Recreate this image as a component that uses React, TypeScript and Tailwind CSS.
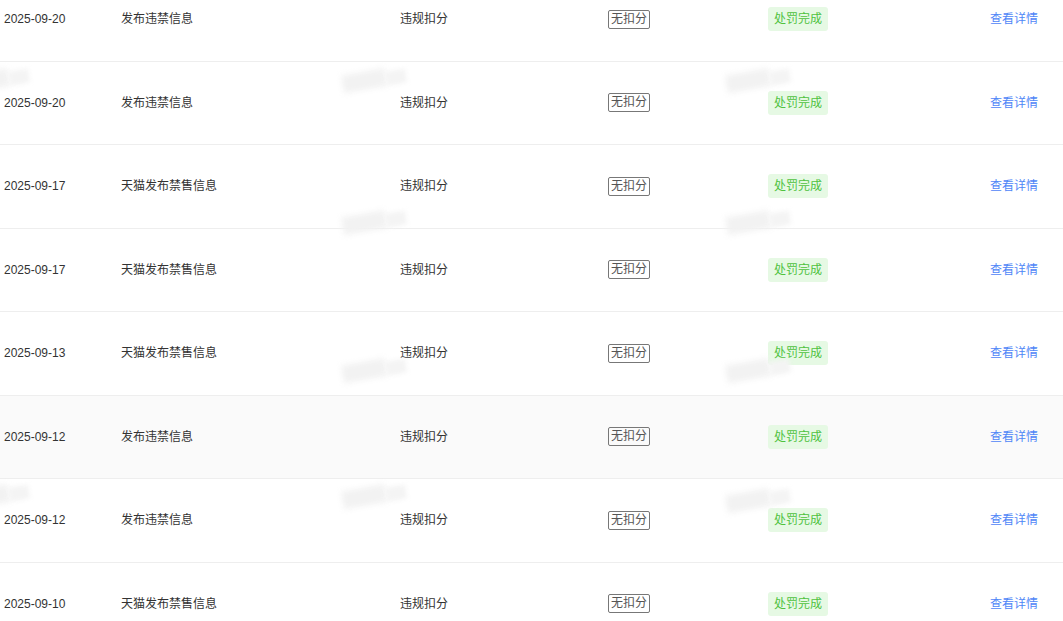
type Row = {
  date: string;
  reason: string;
};

const rows: Row[] = [
  { date: "2025-09-20", reason: "发布违禁信息" },
  { date: "2025-09-20", reason: "发布违禁信息" },
  { date: "2025-09-17", reason: "天猫发布禁售信息" },
  { date: "2025-09-17", reason: "天猫发布禁售信息" },
  { date: "2025-09-13", reason: "天猫发布禁售信息" },
  { date: "2025-09-12", reason: "发布违禁信息" },
  { date: "2025-09-12", reason: "发布违禁信息" },
  { date: "2025-09-10", reason: "天猫发布禁售信息" },
];

// 水印只是淡淡的模糊块,位置大致对齐截图
const marks = [
  { x: -35, y: 70 },
  { x: 342, y: 70 },
  { x: 726, y: 70 },
  { x: 342, y: 212 },
  { x: 726, y: 212 },
  { x: 342, y: 360 },
  { x: 726, y: 360 },
  { x: -35, y: 486 },
  { x: 342, y: 486 },
  { x: 726, y: 490 },
];

function PenaltyRow({ row, hover }: { row: Row; hover: boolean }) {
  return (
    <div
      className={`grid h-[83.5px] grid-cols-[117px_279px_208px_160px_222px_1fr] items-center border-b border-[#eeeeee] pl-1 text-[12px] text-[#333] ${
        hover ? "bg-[#fafafa]" : "bg-white"
      }`}
    >
      <span>{row.date}</span>
      <span>{row.reason}</span>
      <span>违规扣分</span>
      <span>
        <span className="inline-block rounded-[2px] border border-[#777] px-[2px] leading-[17px] text-[#555]">
          无扣分
        </span>
      </span>
      <span>
        <span className="inline-block rounded-[3px] bg-[#e6f9e4] px-[6px] leading-[24px] text-[#4fc23f]">
          处罚完成
        </span>
      </span>
      <span className="cursor-pointer text-[#4f86f7]">查看详情</span>
    </div>
  );
}

export default function App() {
  return (
    <div
      className="relative h-[621px] w-[1063px] overflow-hidden bg-white"
      style={{ fontFamily: '"Liberation Sans", "Noto Sans CJK SC", sans-serif' }}
    >
      <div className="-mt-[22px]">
        {rows.map((r, i) => (
          <PenaltyRow key={i} row={r} hover={i === 5} />
        ))}
      </div>
      {marks.map((m, i) => (
        <div
          key={i}
          className="pointer-events-none absolute flex -rotate-[10deg] items-end"
          style={{ left: m.x, top: m.y }}
        >
          <div className="h-[18px] w-[44px] bg-[#f2f2f2] blur-[3px]" />
          <div className="h-[14px] w-[20px] bg-[#f4f4f4] blur-[2px]" />
        </div>
      ))}
    </div>
  );
}
